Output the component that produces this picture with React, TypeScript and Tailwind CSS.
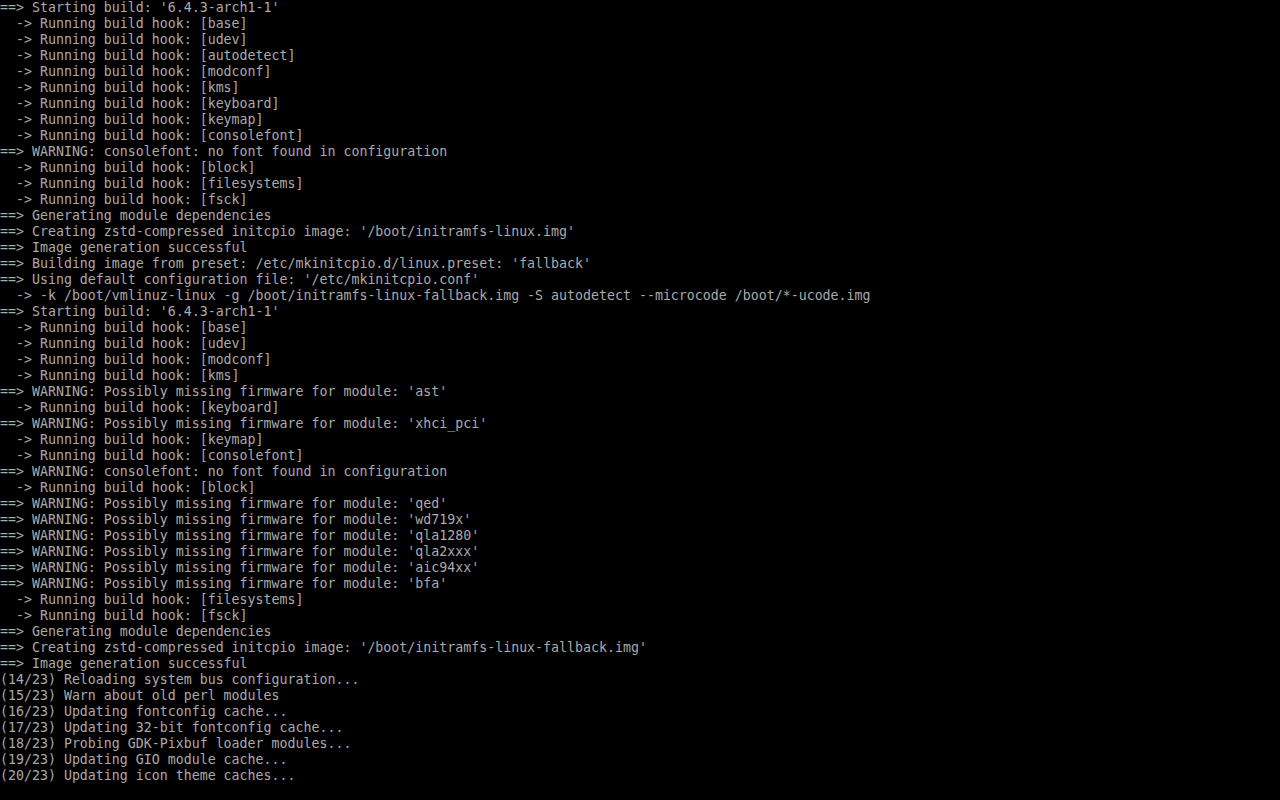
import React from "react";

const lines: string[] = [
  "==> Starting build: '6.4.3-arch1-1'",
  "  -> Running build hook: [base]",
  "  -> Running build hook: [udev]",
  "  -> Running build hook: [autodetect]",
  "  -> Running build hook: [modconf]",
  "  -> Running build hook: [kms]",
  "  -> Running build hook: [keyboard]",
  "  -> Running build hook: [keymap]",
  "  -> Running build hook: [consolefont]",
  "==> WARNING: consolefont: no font found in configuration",
  "  -> Running build hook: [block]",
  "  -> Running build hook: [filesystems]",
  "  -> Running build hook: [fsck]",
  "==> Generating module dependencies",
  "==> Creating zstd-compressed initcpio image: '/boot/initramfs-linux.img'",
  "==> Image generation successful",
  "==> Building image from preset: /etc/mkinitcpio.d/linux.preset: 'fallback'",
  "==> Using default configuration file: '/etc/mkinitcpio.conf'",
  "  -> -k /boot/vmlinuz-linux -g /boot/initramfs-linux-fallback.img -S autodetect --microcode /boot/*-ucode.img",
  "==> Starting build: '6.4.3-arch1-1'",
  "  -> Running build hook: [base]",
  "  -> Running build hook: [udev]",
  "  -> Running build hook: [modconf]",
  "  -> Running build hook: [kms]",
  "==> WARNING: Possibly missing firmware for module: 'ast'",
  "  -> Running build hook: [keyboard]",
  "==> WARNING: Possibly missing firmware for module: 'xhci_pci'",
  "  -> Running build hook: [keymap]",
  "  -> Running build hook: [consolefont]",
  "==> WARNING: consolefont: no font found in configuration",
  "  -> Running build hook: [block]",
  "==> WARNING: Possibly missing firmware for module: 'qed'",
  "==> WARNING: Possibly missing firmware for module: 'wd719x'",
  "==> WARNING: Possibly missing firmware for module: 'qla1280'",
  "==> WARNING: Possibly missing firmware for module: 'qla2xxx'",
  "==> WARNING: Possibly missing firmware for module: 'aic94xx'",
  "==> WARNING: Possibly missing firmware for module: 'bfa'",
  "  -> Running build hook: [filesystems]",
  "  -> Running build hook: [fsck]",
  "==> Generating module dependencies",
  "==> Creating zstd-compressed initcpio image: '/boot/initramfs-linux-fallback.img'",
  "==> Image generation successful",
  "(14/23) Reloading system bus configuration...",
  "(15/23) Warn about old perl modules",
  "(16/23) Updating fontconfig cache...",
  "(17/23) Updating 32-bit fontconfig cache...",
  "(18/23) Probing GDK-Pixbuf loader modules...",
  "(19/23) Updating GIO module cache...",
  "(20/23) Updating icon theme caches...",
];

export default function App() {
  return (
    <div className="w-[1280px] h-[800px] bg-black overflow-hidden">
      <div className="flex flex-col text-[#aaaaaa] font-['DejaVu_Sans_Mono',monospace] text-[13.28px] leading-[16px]">
        {lines.map((l, i) => (
          <div key={i} className="h-[16px] whitespace-pre">
            {l}
          </div>
        ))}
      </div>
    </div>
  );
}
